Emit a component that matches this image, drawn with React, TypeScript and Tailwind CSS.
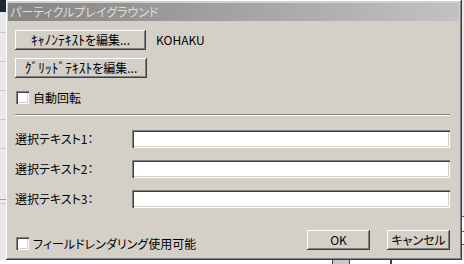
import React from "react";

const raised =
  "bg-[#d4d0c8] shadow-[inset_-1px_-1px_#404040,inset_1px_1px_#ffffff,inset_-2px_-2px_#808080,inset_2px_2px_#d4d0c8]";
const sunken =
  "bg-white shadow-[inset_1px_1px_#808080,inset_2px_2px_#404040,inset_-1px_-1px_#ffffff,inset_-2px_-2px_#d4d0c8]";

function Button({ children, w }: { children: React.ReactNode; w: string }) {
  return (
    <div className={`${raised} ${w} h-[20px] flex items-center justify-center text-[12px] leading-none text-black`}>
      <span className="pb-[1px] flex items-baseline">{children}</span>
    </div>
  );
}

function Check({ label }: { label: string }) {
  return (
    <div className="flex items-center gap-[4px] ml-[1px]">
      <div className={`${sunken} w-[13px] h-[13px]`} />
      <span className="text-[12px] leading-none text-black">{label}</span>
    </div>
  );
}

function Row({ label }: { label: string }) {
  return (
    <div className="flex items-center h-[18px]">
      <span className="w-[117px] text-[12px] leading-none text-black">{label}</span>
      <div className={`${sunken} flex-1 h-[18px]`} />
    </div>
  );
}

export default function App() {
  return (
    <div
      className="w-[464px] h-[264px] overflow-hidden flex flex-col bg-[#f2f2f2] [font-feature-settings:'palt']"
      style={{ fontFamily: '"Noto Sans CJK JP", "Noto Sans", sans-serif' }}
    >
      <div className="flex h-[260px]">
        <div className="w-[6px] flex flex-col">
          <div className="h-[12px] bg-[#1e2a3a]" />
          <div className="flex-1 bg-[#e8e8e8] flex flex-col">
            <div className="h-[20px]" />
            <div className="h-[1px] bg-[#c8c8c8]" />
            <div className="h-[28px]" />
            <div className="h-[1px] bg-[#c8c8c8]" />
            <div className="h-[28px]" />
            <div className="h-[1px] bg-[#c8c8c8]" />
            <div className="h-[28px]" />
            <div className="h-[1px] bg-[#c8c8c8]" />
            <div className="h-[28px]" />
            <div className="h-[1px] bg-[#c8c8c8]" />
            <div className="h-[50px]" />
            <div className="h-[1px] bg-[#9a9a9a]" />
            <div className="h-[3px]" />
            <div className="h-[1px] bg-[#c8c8c8]" />
          </div>
        </div>
        <div className="w-[456px] h-[260px] bg-[#d4d0c8] shadow-[inset_-1px_-1px_#404040,inset_1px_1px_#ffffff,inset_-2px_-2px_#808080,inset_2px_2px_#d4d0c8] pt-[3px] pl-[2px] pr-[3px] flex flex-col">
          <div className="h-[18px] bg-gradient-to-r from-[#858585] to-[#c2c2c6] flex items-center pl-[2px] text-[12px] leading-none text-[#e2ded6]">
            パーティクルプレイグラウンド
          </div>
          <div className="flex flex-col pl-[7px] pr-[9px] pt-[9px]">
            <div className="flex items-center gap-[10px] h-[20px]">
              <Button w="w-[131px]">
                <span className="text-[13.5px]">ｷｬﾉﾝﾃｷｽﾄ</span>
                <span>を編集...</span>
              </Button>
              <span className="text-[12px] leading-none text-black">KOHAKU</span>
            </div>
            <div className="mt-[8px] flex">
              <Button w="w-[132px]">
                <span className="text-[13.5px]">ｸﾞﾘｯﾄﾞﾃｷｽﾄ</span>
                <span>を編集...</span>
              </Button>
            </div>
            <div className="mt-[13px] h-[13px] flex items-center">
              <Check label="自動回転" />
            </div>
            <div className="mt-[10px] h-[2px] border-t border-t-[#808080] border-b border-b-white" />
            <div className="mt-[14px] flex flex-col gap-[12px]">
              <Row label="選択テキスト1：" />
              <Row label="選択テキスト2：" />
              <Row label="選択テキスト3：" />
            </div>
            <div className="mt-[22px] h-[20px] flex items-center">
              <div className="mt-[7px]">
                <Check label="フィールドレンダリング使用可能" />
              </div>
              <div className="flex-1" />
              <Button w="w-[63px]">OK</Button>
              <div className="w-[17px]" />
              <Button w="w-[63px]">キャンセル</Button>
            </div>
          </div>
        </div>
        <div className="w-[2px] bg-[#e8e8e8] flex flex-col">
          <div className="h-[216px]" />
          <div className="h-[1px] bg-[#606060]" />
          <div className="h-[14px] bg-white" />
          <div className="h-[1px] bg-[#606060]" />
          <div className="h-[12px] bg-white" />
          <div className="h-[1px] bg-[#606060]" />
        </div>
      </div>
      <div className="h-[4px] bg-white flex">
        <div className="w-[332px]" />
        <div className="w-[1px] bg-[#404040]" />
        <div className="w-[16px] bg-[#c8c8c8]" />
        <div className="w-[1px] bg-[#404040]" />
        <div className="w-[40px]" />
        <div className="w-[2px] bg-[#404040]" />
      </div>
    </div>
  );
}
